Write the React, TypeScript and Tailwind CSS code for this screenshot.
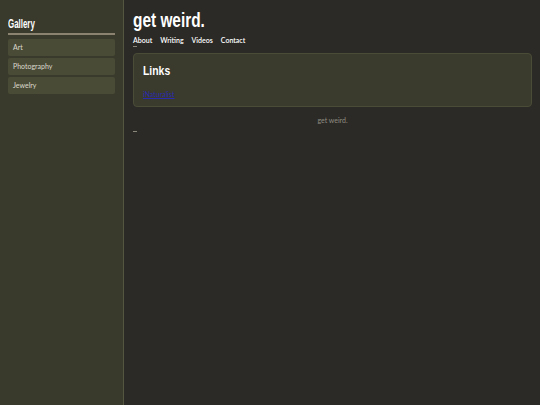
export default function App() {
  const gallery = ["Art", "Photography", "Jewelry"];
  const nav = ["About", "Writing", "Videos", "Contact"];
  const body = { fontFamily: "Lato, 'Noto Sans', sans-serif" };
  const head = { fontFamily: "'Liberation Sans', Arial, sans-serif" };

  return (
    <div className="flex min-h-[405px] w-[540px] bg-[#2b2a26]" style={body}>
      <aside className="w-[124px] shrink-0 bg-[#393a2c] border-r border-[#55563f] px-[8px] pt-[18px]">
        <h2 className="flex pb-[3px] border-b-2 border-[#8b8270]">
          <span className="origin-left scale-x-[0.66] text-[12px] font-bold text-white leading-none" style={head}>
            Gallery
          </span>
        </h2>
        <ul className="mt-[4px] flex flex-col gap-[2px]">
          {gallery.map((g) => (
            <li key={g} className="h-[17px] rounded-[2px] bg-[#4a4b37] px-[5px] flex items-center text-[7px] text-[#dcdacd]">
              {g}
            </li>
          ))}
        </ul>
      </aside>

      <main className="flex-1 pl-[9px] pr-[8px] pt-[10px]">
        <h1 className="flex">
          <span className="origin-left scale-x-[0.77] text-[20px] font-bold text-white leading-none" style={head}>
            get weird.
          </span>
        </h1>
        <nav className="mt-[7px] flex gap-[8px] text-[7px] font-semibold text-white leading-none">
          {nav.map((n) => (
            <span key={n}>{n}</span>
          ))}
        </nav>
        <div className="mt-[2px] w-[4px] h-px bg-[#8a877a]" />
        <section className="mt-[6px] rounded-[4px] border border-[#4b4c38] bg-[#3a3a2d] px-[9px] pt-[10px] pb-[8px]">
          <h2 className="flex">
            <span className="origin-left scale-x-[0.8] text-[13px] font-bold text-white leading-none" style={head}>
              Links
            </span>
          </h2>
          <div className="flex mt-[14px]">
            <a href="#" className="text-[7px] text-[#2a2ab0] underline decoration-[#2a2ab0] leading-none">
              iNaturalist
            </a>
          </div>
        </section>
        <footer className="mt-[10px] text-center text-[7px] text-[#8f8c80] leading-none">get weird.</footer>
        <div className="mt-[7px] w-[4px] h-px bg-[#8a877a]" />
      </main>
    </div>
  );
}
